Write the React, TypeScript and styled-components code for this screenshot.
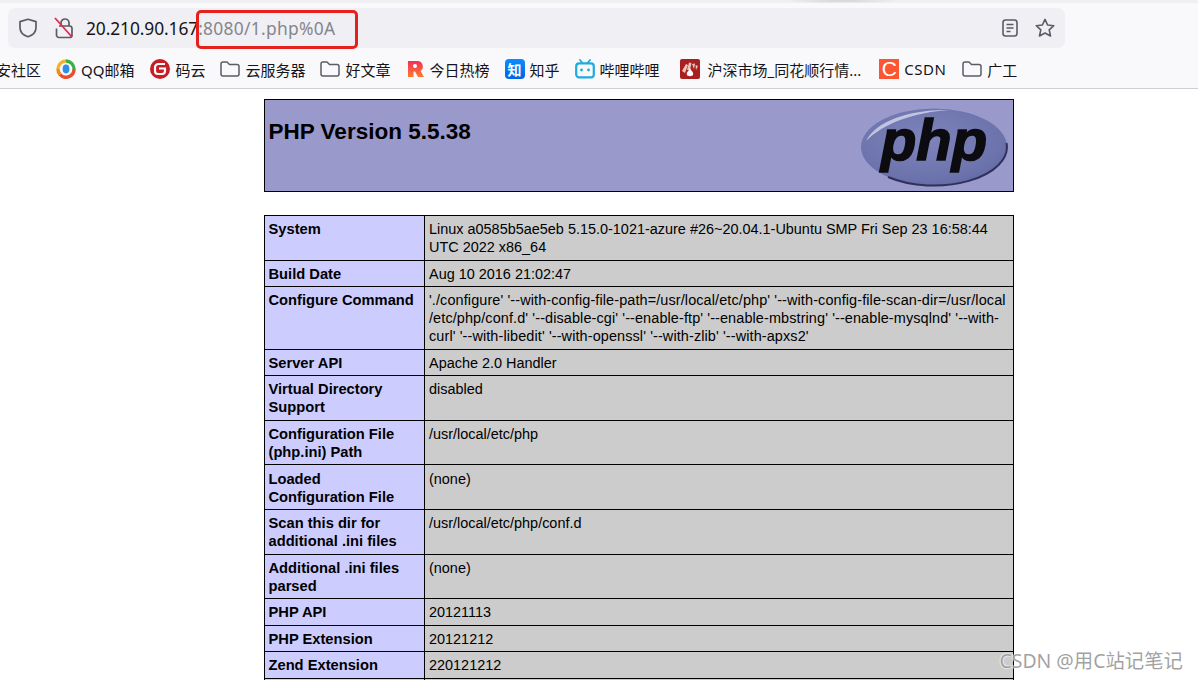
import React from 'react';
import styled, { createGlobalStyle } from 'styled-components';

const UI_FONT = `'Noto Sans', 'Noto Sans CJK SC', sans-serif`;
const PAGE_FONT = `'Liberation Sans', Arial, sans-serif`;

const GlobalStyle = createGlobalStyle`
  html, body {
    margin: 0;
    padding: 0;
    height: 680px;
    overflow: hidden;
    background: #fff;
  }
`;

const Page = styled.div`
  position: relative;
  width: 1198px;
  height: 680px;
  overflow: hidden;
`;

const Chrome = styled.div`
  height: 88px;
  background: #f9f9fb;
  border-bottom: 1px solid #cfcfd1;
  font-family: ${UI_FONT};
`;

const TopStrip = styled.div`
  height: 3px;
  margin-bottom: 5px;
  background: radial-gradient(ellipse 58px 4px at 842px 0, #d2d2d4, transparent), #f0f0f2;
`;

const UrlBar = styled.div`
  display: flex;
  align-items: center;
  height: 40px;
  margin: 0 133px 0 8px;
  padding: 0 10px 0 10px;
  border-radius: 7px;
  background: #f0f0f4;
`;

const UrlText = styled.div`
  margin-left: 12px;
  font-size: 17.4px;
  letter-spacing: -0.1px;
  color: #15141a;
  white-space: nowrap;
`;

const UrlRest = styled.span`
  color: #85858c;
  letter-spacing: 0.28px;
`;

const UrlActions = styled.div`
  display: flex;
  align-items: center;
  gap: 17px;
  margin-left: auto;
`;

const IconSlot = styled.span<{ $gap?: number }>`
  display: flex;
  flex: none;
  margin-left: ${(p) => p.$gap ?? 0}px;
`;

const BookmarkBar = styled.div`
  display: flex;
  align-items: center;
  height: 42px;
  margin-left: -4px;
`;

const Bookmark = styled.div<{ $after?: number; $gap?: number }>`
  display: flex;
  align-items: center;
  gap: ${(p) => p.$gap ?? 5}px;
  margin-right: ${(p) => p.$after ?? 15}px;
  font-size: 15px;
  color: #15141a;
  white-space: nowrap;
`;

const ZhihuMark = styled.span`
  display: flex;
  align-items: center;
  justify-content: center;
  width: 20px;
  height: 20px;
  border-radius: 4px;
  background: linear-gradient(180deg, #0a8cff, #0063e6);
  color: #fff;
  font-size: 14px;
  font-weight: 700;
`;

const CsdnMark = styled.span`
  display: flex;
  align-items: center;
  justify-content: center;
  width: 20px;
  height: 20px;
  background: #fc5531;
  color: #fff;
  font-family: ${PAGE_FONT};
  font-size: 21px;
  line-height: 20px;
`;

const CsdnLabel = styled.span`
  letter-spacing: 0.5px;
`;

const Content = styled.main`
  width: 750px;
  margin: 10px 0 0 264px;
  font-family: ${PAGE_FONT};
  color: #000;
`;

const Banner = styled.header`
  display: flex;
  justify-content: space-between;
  box-sizing: border-box;
  height: 93px;
  padding: 7px 5px 0 3.5px;
  border: 1px solid #000;
  background: #9999cc;
`;

const Heading = styled.h1`
  margin: 10px 0 0;
  font-size: 22.5px;
  line-height: 30px;
  font-weight: 700;
`;

const InfoTable = styled.section`
  margin-top: 23px;
  border: 1px solid #000;
  border-bottom: 0;
  font-size: 14.45px;
  line-height: 18px;
`;

const Row = styled.div`
  display: grid;
  grid-template-columns: 160px 1fr;
  border-bottom: 1px solid #000;
`;

const Label = styled.div`
  padding: 4.2px 4px 3.38px 3.5px;
  background: #ccccff;
  font-size: 14.7px;
  font-weight: 700;
  border-right: 1px solid #000;
`;

const Value = styled.div<{ $spread?: number }>`
  padding: 4.2px 4px 3.38px;
  background: #cccccc;
  letter-spacing: ${(p) => p.$spread ?? 0}px;
`;

const RedBox = styled.div`
  position: absolute;
  left: 196px;
  top: 10px;
  width: 162px;
  height: 39px;
  box-sizing: border-box;
  border: 3px solid #e8201c;
  border-radius: 5px;
`;

const Watermark = styled.div`
  position: absolute;
  right: 15px;
  top: 648px;
  font-family: ${UI_FONT};
  font-size: 19.4px;
  line-height: 26px;
  color: rgba(125, 125, 125, 0.72);
  text-shadow: 0 0 2px #fff, 0 0 2px #fff;
  white-space: nowrap;
`;

const Shield = () => (
  <svg width="20" height="20" viewBox="0 0 20 20" fill="none" stroke="#5b5b66" strokeWidth="1.7">
    <path d="M10 1.2 L18 3.6 V9.5 C18 14.2 14.4 17.4 10 18.8 C5.6 17.4 2 14.2 2 9.5 V3.6 Z" strokeLinejoin="round" />
  </svg>
);

const BrokenLock = () => (
  <svg width="20" height="22" viewBox="0 0 20 22" fill="none" strokeWidth="1.7">
    <path d="M7 9 V6 a4 4 0 0 1 8 0 V9" stroke="#5b5b66" />
    <path d="M5 9 H15.5 a2.5 2.5 0 0 1 2.5 2.5 V18 a2.5 2.5 0 0 1 -2.5 2.5 H5 a2.5 2.5 0 0 1 -2.5 -2.5 V11.5" stroke="#5b5b66" />
    <path d="M1 1 L18 20" stroke="#e22850" strokeWidth="1.8" />
  </svg>
);

const Reader = () => (
  <svg width="16" height="18" viewBox="0 0 16 18" fill="none" stroke="#5b5b66" strokeWidth="1.6">
    <rect x="1" y="1" width="14" height="16" rx="2.5" />
    <path d="M4.5 5.5 H11.5 M4.5 9 H11.5 M4.5 12.5 H8.5" />
  </svg>
);

const Star = () => (
  <svg width="20" height="20" viewBox="0 0 20 20" fill="none" stroke="#5b5b66" strokeWidth="1.6" strokeLinejoin="round">
    <path d="M10 1.4 L12.6 7 L18.8 7.7 L14.2 11.9 L15.5 18 L10 15 L4.5 18 L5.8 11.9 L1.2 7.7 L7.4 7 Z" />
  </svg>
);

const Folder = () => (
  <svg width="20" height="18" viewBox="0 0 20 18" fill="none" stroke="#5b5b66" strokeWidth="1.5">
    <path d="M1 4 a2 2 0 0 1 2 -2 H7 L9.5 4.5 H17 a2 2 0 0 1 2 2 V14 a2 2 0 0 1 -2 2 H3 a2 2 0 0 1 -2 -2 Z" strokeLinejoin="round" />
  </svg>
);

const QQMail = () => (
  <svg width="20" height="20" viewBox="0 0 20 20" fill="none">
    <path d="M2 10 A8 8 0 0 1 10 2" stroke="#f5b324" strokeWidth="3.4" />
    <path d="M10 2 A8 8 0 0 1 18 10" stroke="#3fae49" strokeWidth="3.4" />
    <path d="M18 10 A8 8 0 0 1 4 15.5" stroke="#ea4d2c" strokeWidth="3.4" />
    <path d="M4 15.5 A8 8 0 0 1 2 10" stroke="#f28a1e" strokeWidth="3.4" />
    <ellipse cx="10" cy="10" rx="3.4" ry="4.4" fill="#2f8fe6" />
  </svg>
);

const GiteeMark = () => (
  <svg width="20" height="20" viewBox="0 0 20 20">
    <circle cx="10" cy="10" r="10" fill="#c71d23" />
    <path d="M15 5 H8.5 A3.5 3.5 0 0 0 5 8.5 V12 A3 3 0 0 0 8 15 H12 A3 3 0 0 0 15 12 V9.5 H9" fill="none" stroke="#fff" strokeWidth="2.2" />
  </svg>
);

const RedMark = () => (
  <svg width="18" height="18" viewBox="0 0 18 18">
    <defs>
      <linearGradient id="rm" x1="0" y1="0" x2="0" y2="1">
        <stop offset="0" stopColor="#f0305a" />
        <stop offset="1" stopColor="#ff7a2a" />
      </linearGradient>
    </defs>
    <path d="M1 1 H10.5 A5.5 5.5 0 0 1 13.5 11 L17 17 H11 L8 11.5 H6.5 V17 H1 Z" fill="url(#rm)" />
    <circle cx="8" cy="6" r="2" fill="#fff" />
  </svg>
);

const BiliMark = () => (
  <svg width="20" height="20" viewBox="0 0 20 20" fill="none" stroke="#1eaadf">
    <path d="M5 1 L7.5 4 M15 1 L12.5 4" strokeWidth="1.8" strokeLinecap="round" />
    <rect x="1.2" y="4.4" width="17.6" height="14" rx="3" strokeWidth="2.2" />
    <circle cx="6.5" cy="11" r="1.4" fill="#1eaadf" stroke="none" />
    <circle cx="13.5" cy="11" r="1.4" fill="#1eaadf" stroke="none" />
  </svg>
);

const StockMark = () => (
  <svg width="20" height="20" viewBox="0 0 20 20">
    <rect width="20" height="20" rx="2" fill="#a8201f" />
    <path d="M2 12 L6 5 L8 6 L5 14 Z M7 11 L9 3.5 L11.5 4 L10 11 Z M12 5 L15 4.5 L14 10 Z M15.5 6 L18 7 L16 11 Z" fill="#ecc5bd" />
    <path d="M10 9 C11 12 14 13 13 16 C12.4 17.5 7.6 17.5 7 16 C6 13 9 12 10 9 Z" fill="#fff" />
  </svg>
);

const PhpLogo = () => (
  <svg width="148" height="80" viewBox="0 0 148 80">
    <defs>
      <radialGradient id="oval" cx="0.45" cy="0.4" r="0.8">
        <stop offset="0" stopColor="#7f85bb" />
        <stop offset="0.65" stopColor="#6c72ab" />
        <stop offset="1" stopColor="#585e9a" />
      </radialGradient>
    </defs>
    <ellipse cx="74" cy="40" rx="73" ry="38.5" fill="url(#oval)" />
    <path d="M28 70 A73 38.5 0 0 0 146.5 36" fill="none" stroke="#2f3158" strokeWidth="2" />
    <path d="M6 34 C16 14 50 2 90 3 C55 5 24 16 6 34 Z" fill="#cfd2ea" opacity="0.85" />
    <text
      x="74"
      y="53"
      textAnchor="middle"
      textLength="106"
      lengthAdjust="spacingAndGlyphs"
      fontFamily="'Liberation Sans', Arial, sans-serif"
      fontSize="58"
      fontWeight="700"
      fontStyle="italic"
      fill="#0c0c10"
      stroke="#0c0c10"
      strokeWidth="1.6"
    >
      php
    </text>
  </svg>
);

const infoRows: [string, string, number?][] = [
  ['System', 'Linux a0585b5ae5eb 5.15.0-1021-azure #26~20.04.1-Ubuntu SMP Fri Sep 23 16:58:44 UTC 2022 x86_64'],
  ['Build Date', 'Aug 10 2016 21:02:47'],
  [
    'Configure Command',
    "'./configure' '--with-config-file-path=/usr/local/etc/php' '--with-config-file-scan-dir=/usr/local\u200b/etc/php/conf.d' '--disable-cgi' '--enable-ftp' '--enable-mbstring' '--enable-mysqlnd' '--with-curl' '--with-libedit' '--with-openssl' '--with-zlib' '--with-apxs2'",
    0.11,
  ],
  ['Server API', 'Apache 2.0 Handler'],
  ['Virtual Directory Support', 'disabled'],
  ['Configuration File (php.ini) Path', '/usr/local/etc/php'],
  ['Loaded Configuration File', '(none)'],
  ['Scan this dir for additional .ini files', '/usr/local/etc/php/conf.d'],
  ['Additional .ini files parsed', '(none)'],
  ['PHP API', '20121113'],
  ['PHP Extension', '20121212'],
  ['Zend Extension', '220121212'],
  // next row only shows its top edge above the fold
  ['', ''],
];

const App = () => {
  return (
    <Page>
      <GlobalStyle />
      <Chrome>
        <TopStrip />
        <UrlBar>
          <IconSlot>
            <Shield />
          </IconSlot>
          <IconSlot $gap={16}>
            <BrokenLock />
          </IconSlot>
          <UrlText>
            20.210.90.167<UrlRest>:8080/1.php%0A</UrlRest>
          </UrlText>
          <UrlActions>
            <Reader />
            <Star />
          </UrlActions>
        </UrlBar>
        <BookmarkBar>
          <Bookmark>安社区</Bookmark>
          <Bookmark $after={16}>
            <QQMail />
            QQ邮箱
          </Bookmark>
          <Bookmark $after={15}>
            <GiteeMark />
            码云
          </Bookmark>
          <Bookmark $after={15}>
            <Folder />
            云服务器
          </Bookmark>
          <Bookmark $after={16}>
            <Folder />
            好文章
          </Bookmark>
          <Bookmark>
            <RedMark />
            今日热榜
          </Bookmark>
          <Bookmark>
            <ZhihuMark>知</ZhihuMark>
            知乎
          </Bookmark>
          <Bookmark $after={20}>
            <BiliMark />
            哔哩哔哩
          </Bookmark>
          <Bookmark $after={18} $gap={8}>
            <StockMark />
            沪深市场_同花顺行情...
          </Bookmark>
          <Bookmark $after={16}>
            <CsdnMark>C</CsdnMark>
            <CsdnLabel>CSDN</CsdnLabel>
          </Bookmark>
          <Bookmark>
            <Folder />
            广工
          </Bookmark>
        </BookmarkBar>
      </Chrome>
      <Content>
        <Banner>
          <Heading>PHP Version 5.5.38</Heading>
          <PhpLogo />
        </Banner>
        <InfoTable>
          {infoRows.map(([label, value, spread]) => (
            <Row key={label}>
              <Label>{label}</Label>
              <Value $spread={spread}>{value}</Value>
            </Row>
          ))}
        </InfoTable>
      </Content>
      <RedBox />
      <Watermark>CSDN @用C站记笔记</Watermark>
    </Page>
  );
};

export default App;
